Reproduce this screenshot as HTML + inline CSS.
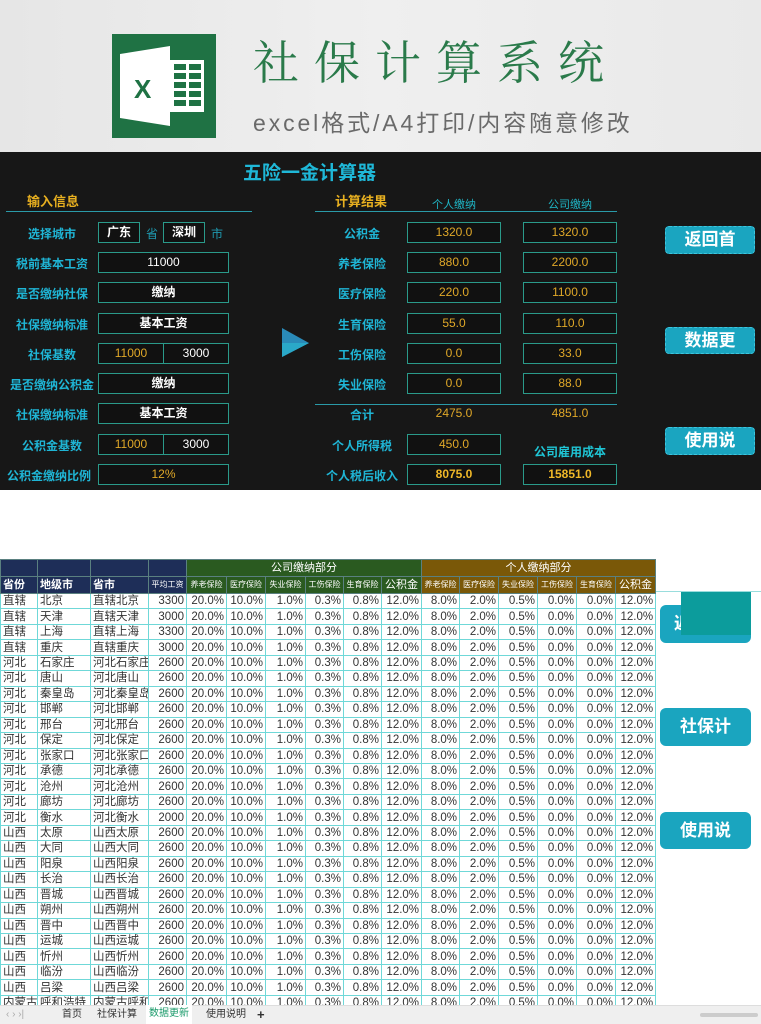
<!DOCTYPE html>
<html><head><meta charset="utf-8">
<style>
*{margin:0;padding:0;box-sizing:border-box}
body{width:761px;height:1024px;overflow:hidden;background:#fff;font-family:"Liberation Sans","Noto Sans CJK SC",sans-serif;position:relative}
.a{position:absolute}
#top{left:0;top:0;width:761px;height:152px;background:linear-gradient(90deg,#e6e6e6,#efefef 50%,#e9e9e9)}
#dark{left:0;top:152px;width:761px;height:338px;background:#171717}
.lab{position:absolute;color:#1fb5d5;font-weight:bold;font-size:12px;text-align:center;white-space:nowrap}
.box{position:absolute;border:1px solid #2a9a8a;background:#111;height:21px;line-height:19px;text-align:center;font-size:12px;color:#fff;font-weight:bold}
.y{color:#e0a828;font-weight:normal}
.yb{color:#f0b828;font-weight:bold}
.btn{position:absolute;background:#1aa5c0;color:#fff;font-weight:bold;font-size:17px;text-align:center;border-radius:4px;border:1px dashed #3fc5dd}
table{border-collapse:collapse;table-layout:fixed;font-size:11.5px;color:#333}
td{border:1px solid #6fd8d8;height:15.46px;line-height:14px;padding:0 2px;white-space:nowrap;overflow:hidden}
td.n{text-align:right}
.h td{color:#fff;font-size:8px;text-align:center;border-color:#5a8080;height:17px}
</style></head><body>
<div id="top" class="a"></div>
<div class="a" style="left:112px;top:34px;width:104px;height:104px;background:#1f7244"></div>
<svg class="a" style="left:112px;top:34px" width="104" height="104" viewBox="0 0 104 104">
<rect x="58" y="26" width="34" height="52" fill="#fff"/>
<g fill="#1f7244"><rect x="62" y="30" width="12" height="6"/><rect x="77" y="30" width="12" height="6"/><rect x="62" y="39" width="12" height="6"/><rect x="77" y="39" width="12" height="6"/><rect x="62" y="48" width="12" height="6"/><rect x="77" y="48" width="12" height="6"/><rect x="62" y="57" width="12" height="6"/><rect x="77" y="57" width="12" height="6"/><rect x="62" y="66" width="12" height="6"/><rect x="77" y="66" width="12" height="6"/></g>
<polygon points="8,20 58,12 58,92 8,84" fill="#fff"/>
<text x="22" y="64" font-family="Liberation Sans" font-weight="bold" font-size="26" fill="#1f7244">X</text>
</svg>
<div class="a" style="left:253px;top:32px;font-size:46px;color:#2a7a4a;letter-spacing:15px;font-family:'Noto Serif CJK SC',serif;line-height:56px">社保计算系统</div>
<div class="a" style="left:253px;top:108px;font-size:23px;color:#6a6a6a;line-height:30px;letter-spacing:2.9px;white-space:nowrap">excel格式/A4打印/内容随意修改</div>

<div id="dark" class="a"></div>
<div class="a" style="left:243px;top:158px;font-size:19px;color:#1fb8d8;font-weight:bold">五险一金计算器</div>
<div class="a" style="left:27px;top:191px;font-size:13px;color:#e8b020;font-weight:bold">输入信息</div>
<div class="a" style="left:6px;top:211px;width:246px;height:1px;background:#2a9aa8"></div>
<div class="a" style="left:335px;top:191px;font-size:13px;color:#e8b020;font-weight:bold">计算结果</div>
<div class="a" style="left:315px;top:211px;width:302px;height:1px;background:#2a9aa8"></div>
<div class="a" style="left:432px;top:196px;font-size:11px;color:#1fb5c5">个人缴纳</div>
<div class="a" style="left:548px;top:196px;font-size:11px;color:#1fb5c5">公司缴纳</div>

<div class="lab" style="left:0;width:104px;top:225px">选择城市</div>
<div class="lab" style="left:0;width:104px;top:255px">税前基本工资</div>
<div class="lab" style="left:0;width:104px;top:285px">是否缴纳社保</div>
<div class="lab" style="left:0;width:104px;top:316px">社保缴纳标准</div>
<div class="lab" style="left:0;width:104px;top:346px">社保基数</div>
<div class="lab" style="left:0;width:104px;top:376px">是否缴纳公积金</div>
<div class="lab" style="left:0;width:104px;top:406px">社保缴纳标准</div>
<div class="lab" style="left:0;width:104px;top:437px">公积金基数</div>
<div class="lab" style="left:0;width:98px;top:467px">公积金缴纳比例</div>

<div class="box" style="left:98px;top:222px;width:42px">广东</div>
<div class="a" style="left:146px;top:225px;font-size:12px;color:#1f9ab0">省</div>
<div class="box" style="left:163px;top:222px;width:42px">深圳</div>
<div class="a" style="left:211px;top:225px;font-size:12px;color:#1f9ab0">市</div>
<div class="box" style="left:98px;top:252px;width:131px;font-weight:normal">11000</div>
<div class="box" style="left:98px;top:282px;width:131px">缴纳</div>
<div class="box" style="left:98px;top:313px;width:131px">基本工资</div>
<div class="box y" style="left:98px;top:343px;width:66px">11000</div>
<div class="box" style="left:163px;top:343px;width:66px;font-weight:normal">3000</div>
<div class="box" style="left:98px;top:373px;width:131px">缴纳</div>
<div class="box" style="left:98px;top:403px;width:131px">基本工资</div>
<div class="box y" style="left:98px;top:434px;width:66px">11000</div>
<div class="box" style="left:163px;top:434px;width:66px;font-weight:normal">3000</div>
<div class="box y" style="left:98px;top:464px;width:131px">12%</div>

<svg class="a" style="left:282px;top:328px" width="28" height="30"><polygon points="0,0 27,15 0,29" fill="#2a8ab8"/><polygon points="0,15 27,15 0,29" fill="#2aa8c8"/></svg>

<div class="lab" style="left:315px;width:94px;top:225px">公积金</div>
<div class="lab" style="left:315px;width:94px;top:255px">养老保险</div>
<div class="lab" style="left:315px;width:94px;top:285px">医疗保险</div>
<div class="lab" style="left:315px;width:94px;top:316px">生育保险</div>
<div class="lab" style="left:315px;width:94px;top:346px">工伤保险</div>
<div class="lab" style="left:315px;width:94px;top:376px">失业保险</div>
<div class="a" style="left:315px;top:404px;width:302px;height:1px;background:#2a9aa8"></div>
<div class="lab" style="left:315px;width:94px;top:406px">合计</div>
<div class="lab" style="left:315px;width:94px;top:437px">个人所得税</div>
<div class="lab" style="left:315px;width:94px;top:467px">个人税后收入</div>

<div class="box y" style="left:407px;top:222px;width:94px">1320.0</div>
<div class="box y" style="left:523px;top:222px;width:94px">1320.0</div>
<div class="box y" style="left:407px;top:252px;width:94px">880.0</div>
<div class="box y" style="left:523px;top:252px;width:94px">2200.0</div>
<div class="box y" style="left:407px;top:282px;width:94px">220.0</div>
<div class="box y" style="left:523px;top:282px;width:94px">1100.0</div>
<div class="box y" style="left:407px;top:313px;width:94px">55.0</div>
<div class="box y" style="left:523px;top:313px;width:94px">110.0</div>
<div class="box y" style="left:407px;top:343px;width:94px">0.0</div>
<div class="box y" style="left:523px;top:343px;width:94px">33.0</div>
<div class="box y" style="left:407px;top:373px;width:94px">0.0</div>
<div class="box y" style="left:523px;top:373px;width:94px">88.0</div>
<div class="a" style="left:407px;top:406px;width:94px;text-align:center;font-size:12px;color:#e0a828">2475.0</div>
<div class="a" style="left:523px;top:406px;width:94px;text-align:center;font-size:12px;color:#e0a828">4851.0</div>
<div class="box y" style="left:407px;top:434px;width:94px">450.0</div>
<div class="lab" style="left:523px;width:94px;top:443px;color:#1fc5d5">公司雇用成本</div>
<div class="box yb" style="left:407px;top:464px;width:94px">8075.0</div>
<div class="box yb" style="left:523px;top:464px;width:94px">15851.0</div>

<div class="btn" style="left:665px;top:226px;width:90px;height:28px;line-height:26px">返回首</div>
<div class="btn" style="left:665px;top:327px;width:90px;height:27px;line-height:25px">数据更</div>
<div class="btn" style="left:665px;top:427px;width:90px;height:28px;line-height:26px">使用说</div>

<div class="a" style="left:660px;top:605px;width:91px;height:38px;background:#1aa5bf;border-radius:6px;color:#fff;font-weight:bold;font-size:17px;line-height:38px;padding-left:14px">返</div>
<div class="a" style="left:681px;top:592px;width:70px;height:43px;background:#0c9c9c"></div>
<div class="a" style="left:660px;top:708px;width:91px;height:38px;background:#1aa5bf;border-radius:6px;color:#fff;font-weight:bold;font-size:17px;line-height:38px;text-align:center">社保计</div>
<div class="a" style="left:660px;top:812px;width:91px;height:37px;background:#1aa5bf;border-radius:6px;color:#fff;font-weight:bold;font-size:17px;line-height:37px;text-align:center">使用说</div>
<div class="a" style="left:655px;top:591px;width:106px;height:1px;background:#9dd"></div>

<table class="a" style="left:0;top:559px;width:656px">
<colgroup><col style="width:37px"><col style="width:53px"><col style="width:58px"><col style="width:38px"><col style="width:40px"><col style="width:39px"><col style="width:40px"><col style="width:38px"><col style="width:38px"><col style="width:40px"><col style="width:38px"><col style="width:39px"><col style="width:39px"><col style="width:39px"><col style="width:39px"><col style="width:40px"></colgroup>
<tr class="h"><td style="background:#1e2e58"></td><td style="background:#1e2e58"></td><td style="background:#1e2e58"></td><td style="background:#1e2e58"></td><td colspan="6" style="background:#2a5a20;font-size:11px">公司缴纳部分</td><td colspan="6" style="background:#7a5808;font-size:11px">个人缴纳部分</td></tr>
<tr class="h"><td style="background:#1e2e58;font-size:11px;font-weight:bold;text-align:left">省份</td><td style="background:#1e2e58;font-size:11px;font-weight:bold;text-align:left">地级市</td><td style="background:#1e2e58;font-size:11px;font-weight:bold;text-align:left">省市</td><td style="background:#1e2e58">平均工资</td><td style="background:#2a5a20">养老保险</td><td style="background:#2a5a20">医疗保险</td><td style="background:#2a5a20">失业保险</td><td style="background:#2a5a20">工伤保险</td><td style="background:#2a5a20">生育保险</td><td style="background:#2a5a20;font-size:11px">公积金</td><td style="background:#7a5808">养老保险</td><td style="background:#7a5808">医疗保险</td><td style="background:#7a5808">失业保险</td><td style="background:#7a5808">工伤保险</td><td style="background:#7a5808">生育保险</td><td style="background:#7a5808;font-size:11px">公积金</td></tr>
<tr><td>直辖</td><td>北京</td><td>直辖北京</td><td class="n">3300</td><td class="n">20.0%</td><td class="n">10.0%</td><td class="n">1.0%</td><td class="n">0.3%</td><td class="n">0.8%</td><td class="n">12.0%</td><td class="n">8.0%</td><td class="n">2.0%</td><td class="n">0.5%</td><td class="n">0.0%</td><td class="n">0.0%</td><td class="n">12.0%</td></tr>
<tr><td>直辖</td><td>天津</td><td>直辖天津</td><td class="n">3000</td><td class="n">20.0%</td><td class="n">10.0%</td><td class="n">1.0%</td><td class="n">0.3%</td><td class="n">0.8%</td><td class="n">12.0%</td><td class="n">8.0%</td><td class="n">2.0%</td><td class="n">0.5%</td><td class="n">0.0%</td><td class="n">0.0%</td><td class="n">12.0%</td></tr>
<tr><td>直辖</td><td>上海</td><td>直辖上海</td><td class="n">3300</td><td class="n">20.0%</td><td class="n">10.0%</td><td class="n">1.0%</td><td class="n">0.3%</td><td class="n">0.8%</td><td class="n">12.0%</td><td class="n">8.0%</td><td class="n">2.0%</td><td class="n">0.5%</td><td class="n">0.0%</td><td class="n">0.0%</td><td class="n">12.0%</td></tr>
<tr><td>直辖</td><td>重庆</td><td>直辖重庆</td><td class="n">3000</td><td class="n">20.0%</td><td class="n">10.0%</td><td class="n">1.0%</td><td class="n">0.3%</td><td class="n">0.8%</td><td class="n">12.0%</td><td class="n">8.0%</td><td class="n">2.0%</td><td class="n">0.5%</td><td class="n">0.0%</td><td class="n">0.0%</td><td class="n">12.0%</td></tr>
<tr><td>河北</td><td>石家庄</td><td>河北石家庄</td><td class="n">2600</td><td class="n">20.0%</td><td class="n">10.0%</td><td class="n">1.0%</td><td class="n">0.3%</td><td class="n">0.8%</td><td class="n">12.0%</td><td class="n">8.0%</td><td class="n">2.0%</td><td class="n">0.5%</td><td class="n">0.0%</td><td class="n">0.0%</td><td class="n">12.0%</td></tr>
<tr><td>河北</td><td>唐山</td><td>河北唐山</td><td class="n">2600</td><td class="n">20.0%</td><td class="n">10.0%</td><td class="n">1.0%</td><td class="n">0.3%</td><td class="n">0.8%</td><td class="n">12.0%</td><td class="n">8.0%</td><td class="n">2.0%</td><td class="n">0.5%</td><td class="n">0.0%</td><td class="n">0.0%</td><td class="n">12.0%</td></tr>
<tr><td>河北</td><td>秦皇岛</td><td>河北秦皇岛</td><td class="n">2600</td><td class="n">20.0%</td><td class="n">10.0%</td><td class="n">1.0%</td><td class="n">0.3%</td><td class="n">0.8%</td><td class="n">12.0%</td><td class="n">8.0%</td><td class="n">2.0%</td><td class="n">0.5%</td><td class="n">0.0%</td><td class="n">0.0%</td><td class="n">12.0%</td></tr>
<tr><td>河北</td><td>邯郸</td><td>河北邯郸</td><td class="n">2600</td><td class="n">20.0%</td><td class="n">10.0%</td><td class="n">1.0%</td><td class="n">0.3%</td><td class="n">0.8%</td><td class="n">12.0%</td><td class="n">8.0%</td><td class="n">2.0%</td><td class="n">0.5%</td><td class="n">0.0%</td><td class="n">0.0%</td><td class="n">12.0%</td></tr>
<tr><td>河北</td><td>邢台</td><td>河北邢台</td><td class="n">2600</td><td class="n">20.0%</td><td class="n">10.0%</td><td class="n">1.0%</td><td class="n">0.3%</td><td class="n">0.8%</td><td class="n">12.0%</td><td class="n">8.0%</td><td class="n">2.0%</td><td class="n">0.5%</td><td class="n">0.0%</td><td class="n">0.0%</td><td class="n">12.0%</td></tr>
<tr><td>河北</td><td>保定</td><td>河北保定</td><td class="n">2600</td><td class="n">20.0%</td><td class="n">10.0%</td><td class="n">1.0%</td><td class="n">0.3%</td><td class="n">0.8%</td><td class="n">12.0%</td><td class="n">8.0%</td><td class="n">2.0%</td><td class="n">0.5%</td><td class="n">0.0%</td><td class="n">0.0%</td><td class="n">12.0%</td></tr>
<tr><td>河北</td><td>张家口</td><td>河北张家口</td><td class="n">2600</td><td class="n">20.0%</td><td class="n">10.0%</td><td class="n">1.0%</td><td class="n">0.3%</td><td class="n">0.8%</td><td class="n">12.0%</td><td class="n">8.0%</td><td class="n">2.0%</td><td class="n">0.5%</td><td class="n">0.0%</td><td class="n">0.0%</td><td class="n">12.0%</td></tr>
<tr><td>河北</td><td>承德</td><td>河北承德</td><td class="n">2600</td><td class="n">20.0%</td><td class="n">10.0%</td><td class="n">1.0%</td><td class="n">0.3%</td><td class="n">0.8%</td><td class="n">12.0%</td><td class="n">8.0%</td><td class="n">2.0%</td><td class="n">0.5%</td><td class="n">0.0%</td><td class="n">0.0%</td><td class="n">12.0%</td></tr>
<tr><td>河北</td><td>沧州</td><td>河北沧州</td><td class="n">2600</td><td class="n">20.0%</td><td class="n">10.0%</td><td class="n">1.0%</td><td class="n">0.3%</td><td class="n">0.8%</td><td class="n">12.0%</td><td class="n">8.0%</td><td class="n">2.0%</td><td class="n">0.5%</td><td class="n">0.0%</td><td class="n">0.0%</td><td class="n">12.0%</td></tr>
<tr><td>河北</td><td>廊坊</td><td>河北廊坊</td><td class="n">2600</td><td class="n">20.0%</td><td class="n">10.0%</td><td class="n">1.0%</td><td class="n">0.3%</td><td class="n">0.8%</td><td class="n">12.0%</td><td class="n">8.0%</td><td class="n">2.0%</td><td class="n">0.5%</td><td class="n">0.0%</td><td class="n">0.0%</td><td class="n">12.0%</td></tr>
<tr><td>河北</td><td>衡水</td><td>河北衡水</td><td class="n">2000</td><td class="n">20.0%</td><td class="n">10.0%</td><td class="n">1.0%</td><td class="n">0.3%</td><td class="n">0.8%</td><td class="n">12.0%</td><td class="n">8.0%</td><td class="n">2.0%</td><td class="n">0.5%</td><td class="n">0.0%</td><td class="n">0.0%</td><td class="n">12.0%</td></tr>
<tr><td>山西</td><td>太原</td><td>山西太原</td><td class="n">2600</td><td class="n">20.0%</td><td class="n">10.0%</td><td class="n">1.0%</td><td class="n">0.3%</td><td class="n">0.8%</td><td class="n">12.0%</td><td class="n">8.0%</td><td class="n">2.0%</td><td class="n">0.5%</td><td class="n">0.0%</td><td class="n">0.0%</td><td class="n">12.0%</td></tr>
<tr><td>山西</td><td>大同</td><td>山西大同</td><td class="n">2600</td><td class="n">20.0%</td><td class="n">10.0%</td><td class="n">1.0%</td><td class="n">0.3%</td><td class="n">0.8%</td><td class="n">12.0%</td><td class="n">8.0%</td><td class="n">2.0%</td><td class="n">0.5%</td><td class="n">0.0%</td><td class="n">0.0%</td><td class="n">12.0%</td></tr>
<tr><td>山西</td><td>阳泉</td><td>山西阳泉</td><td class="n">2600</td><td class="n">20.0%</td><td class="n">10.0%</td><td class="n">1.0%</td><td class="n">0.3%</td><td class="n">0.8%</td><td class="n">12.0%</td><td class="n">8.0%</td><td class="n">2.0%</td><td class="n">0.5%</td><td class="n">0.0%</td><td class="n">0.0%</td><td class="n">12.0%</td></tr>
<tr><td>山西</td><td>长治</td><td>山西长治</td><td class="n">2600</td><td class="n">20.0%</td><td class="n">10.0%</td><td class="n">1.0%</td><td class="n">0.3%</td><td class="n">0.8%</td><td class="n">12.0%</td><td class="n">8.0%</td><td class="n">2.0%</td><td class="n">0.5%</td><td class="n">0.0%</td><td class="n">0.0%</td><td class="n">12.0%</td></tr>
<tr><td>山西</td><td>晋城</td><td>山西晋城</td><td class="n">2600</td><td class="n">20.0%</td><td class="n">10.0%</td><td class="n">1.0%</td><td class="n">0.3%</td><td class="n">0.8%</td><td class="n">12.0%</td><td class="n">8.0%</td><td class="n">2.0%</td><td class="n">0.5%</td><td class="n">0.0%</td><td class="n">0.0%</td><td class="n">12.0%</td></tr>
<tr><td>山西</td><td>朔州</td><td>山西朔州</td><td class="n">2600</td><td class="n">20.0%</td><td class="n">10.0%</td><td class="n">1.0%</td><td class="n">0.3%</td><td class="n">0.8%</td><td class="n">12.0%</td><td class="n">8.0%</td><td class="n">2.0%</td><td class="n">0.5%</td><td class="n">0.0%</td><td class="n">0.0%</td><td class="n">12.0%</td></tr>
<tr><td>山西</td><td>晋中</td><td>山西晋中</td><td class="n">2600</td><td class="n">20.0%</td><td class="n">10.0%</td><td class="n">1.0%</td><td class="n">0.3%</td><td class="n">0.8%</td><td class="n">12.0%</td><td class="n">8.0%</td><td class="n">2.0%</td><td class="n">0.5%</td><td class="n">0.0%</td><td class="n">0.0%</td><td class="n">12.0%</td></tr>
<tr><td>山西</td><td>运城</td><td>山西运城</td><td class="n">2600</td><td class="n">20.0%</td><td class="n">10.0%</td><td class="n">1.0%</td><td class="n">0.3%</td><td class="n">0.8%</td><td class="n">12.0%</td><td class="n">8.0%</td><td class="n">2.0%</td><td class="n">0.5%</td><td class="n">0.0%</td><td class="n">0.0%</td><td class="n">12.0%</td></tr>
<tr><td>山西</td><td>忻州</td><td>山西忻州</td><td class="n">2600</td><td class="n">20.0%</td><td class="n">10.0%</td><td class="n">1.0%</td><td class="n">0.3%</td><td class="n">0.8%</td><td class="n">12.0%</td><td class="n">8.0%</td><td class="n">2.0%</td><td class="n">0.5%</td><td class="n">0.0%</td><td class="n">0.0%</td><td class="n">12.0%</td></tr>
<tr><td>山西</td><td>临汾</td><td>山西临汾</td><td class="n">2600</td><td class="n">20.0%</td><td class="n">10.0%</td><td class="n">1.0%</td><td class="n">0.3%</td><td class="n">0.8%</td><td class="n">12.0%</td><td class="n">8.0%</td><td class="n">2.0%</td><td class="n">0.5%</td><td class="n">0.0%</td><td class="n">0.0%</td><td class="n">12.0%</td></tr>
<tr><td>山西</td><td>吕梁</td><td>山西吕梁</td><td class="n">2600</td><td class="n">20.0%</td><td class="n">10.0%</td><td class="n">1.0%</td><td class="n">0.3%</td><td class="n">0.8%</td><td class="n">12.0%</td><td class="n">8.0%</td><td class="n">2.0%</td><td class="n">0.5%</td><td class="n">0.0%</td><td class="n">0.0%</td><td class="n">12.0%</td></tr>
<tr><td>内蒙古</td><td>呼和浩特</td><td>内蒙古呼和浩特</td><td class="n">2600</td><td class="n">20.0%</td><td class="n">10.0%</td><td class="n">1.0%</td><td class="n">0.3%</td><td class="n">0.8%</td><td class="n">12.0%</td><td class="n">8.0%</td><td class="n">2.0%</td><td class="n">0.5%</td><td class="n">0.0%</td><td class="n">0.0%</td><td class="n">12.0%</td></tr>
</table>

<div class="a" style="left:0;top:1005px;width:761px;height:19px;background:#efefef;border-top:1px solid #ddd;font-size:10px;color:#333;line-height:18px">
<span class="a" style="left:6px;color:#aaa">‹ › ›|</span>
<span class="a" style="left:62px">首页</span>
<span class="a" style="left:97px">社保计算</span>
<span class="a" style="left:146px;top:-1px;width:46px;height:19px;background:#fff;color:#1a9a6a;text-align:center">数据更新</span>
<span class="a" style="left:206px">使用说明</span>
<span class="a" style="left:257px;font-size:13px;font-weight:bold">+</span>
<span class="a" style="left:700px;top:7px;width:58px;height:4px;background:#ccc;border-radius:2px"></span>
</div>
</body></html>
